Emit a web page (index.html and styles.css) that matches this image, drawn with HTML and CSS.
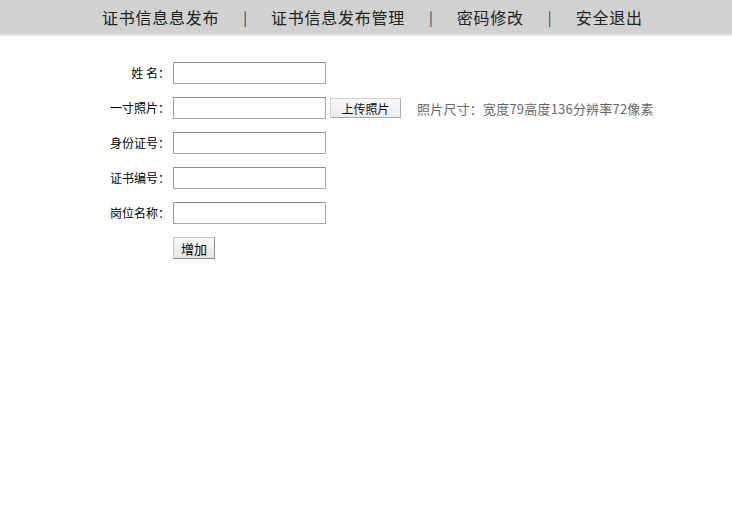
FILE: index.html
```html
<!DOCTYPE html>
<html lang="zh-CN">
<head>
<meta charset="utf-8">
<title>证书信息发布</title>
<link rel="stylesheet" href="styles.css">
</head>
<body>
<div class="topbar">
  <nav class="nav">
    <a class="nav-item">证书信息息发布</a>
    <span class="sep">|</span>
    <a class="nav-item">证书信息发布管理</a>
    <span class="sep">|</span>
    <a class="nav-item">密码修改</a>
    <span class="sep">|</span>
    <a class="nav-item">安全退出</a>
  </nav>
</div>
<form class="form">
  <label class="label">姓 名：</label>
  <div class="field"><input class="text" type="text"></div>

  <label class="label">一寸照片：</label>
  <div class="field">
    <input class="text" type="text">
    <button type="button" class="upload">上传照片</button>
    <span class="hint">照片尺寸：宽度79高度136分辨率72像素</span>
  </div>

  <label class="label">身份证号：</label>
  <div class="field"><input class="text" type="text"></div>

  <label class="label">证书编号：</label>
  <div class="field"><input class="text" type="text"></div>

  <label class="label">岗位名称：</label>
  <div class="field"><input class="text" type="text"></div>

  <span class="label"></span>
  <div class="field"><button type="button" class="add">增加</button></div>
</form>
</body>
</html>
```
FILE: styles.css
```css
html, body {
  margin: 0;
  padding: 0;
  background: #ffffff;
  font-family: "Noto Sans CJK SC", "Liberation Sans", sans-serif;
  color: #000;
}
.topbar {
  height: 34px;
  background: #d1d1d1;
  border-bottom: 2px solid #e3e3e3;
  display: flex;
  align-items: center;
}
.nav {
  display: flex;
  align-items: center;
  padding-left: 102px;
  padding-bottom: 1px;
  gap: 24px;
  font-size: 16px;
  letter-spacing: 0.75px;
  color: #222;
}
.nav-item {
  color: #222;
  text-decoration: none;
}
.sep {
  font-size: 14px;
  color: #333;
  letter-spacing: 0;
}
.form {
  display: grid;
  grid-template-columns: 170px auto;
  column-gap: 3px;
  row-gap: 13px;
  grid-auto-rows: 22px;
  margin-top: 26px;
  align-items: center;
}
.label {
  text-align: right;
  font-size: 12px;
  color: #000;
  line-height: 22px;
}
.field {
  display: flex;
  align-items: center;
  height: 22px;
}
.text {
  box-sizing: border-box;
  width: 153px;
  height: 22px;
  margin: 0;
  padding: 0 2px;
  border: 1px solid #a7a7a7;
  border-top-color: #8e8e8e;
  border-left-color: #9a9a9a;
  background: #fff;
  font-size: 12px;
}
.upload {
  box-sizing: border-box;
  width: 71px;
  height: 20px;
  margin-left: 4px;
  padding: 0;
  border: 1px solid #cfcfcf;
  border-right-color: #a8a8a8;
  border-bottom-color: #a8a8a8;
  background: linear-gradient(#f8f8f8, #ececec);
  font-family: "Noto Sans CJK SC", sans-serif;
  font-size: 12px;
  color: #111;
}
.hint {
  margin-left: 16px;
  font-size: 13px;
  letter-spacing: 0.2px;
  color: #666;
  white-space: nowrap;
}
.add {
  box-sizing: border-box;
  width: 42px;
  height: 22px;
  margin: 0;
  padding: 0;
  border: 1px solid #8a8a8a;
  border-top-color: #c4c4c4;
  border-left-color: #c4c4c4;
  background: linear-gradient(#f7f7f7, #e6e6e6);
  font-family: "Noto Sans CJK SC", sans-serif;
  font-size: 13px;
  color: #000;
}
```
